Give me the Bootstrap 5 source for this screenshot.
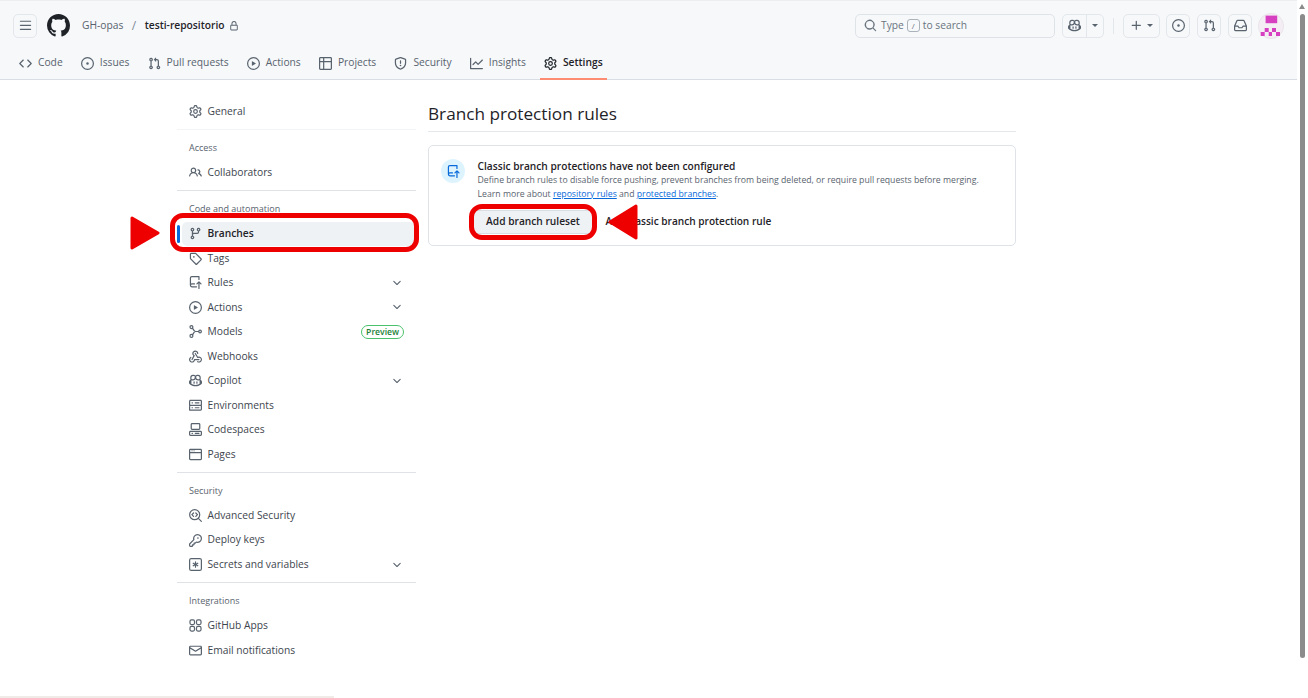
<!DOCTYPE html>
<html lang="en">
<head>
  <meta charset="UTF-8" />
  <meta name="viewport" content="width=device-width, initial-scale=1.0" />
  <title>Branches</title>
  <link href="https://cdn.jsdelivr.net/npm/bootstrap@5.3.0/dist/css/bootstrap.min.css" rel="stylesheet" />
  <style>
    html, body { height: 100%; overflow: hidden; }
    body { background: #fff; color: #1f2328; font-family: "Open Sans", "Liberation Sans", sans-serif; font-size: 10.25px; }
    .gh-page { width: 1308px; height: 698px; position: relative; overflow: hidden; }
    .ico { width: 13px; height: 13px; fill: currentColor; flex: none; }
    .ico-line { fill: none; stroke: currentColor; stroke-width: 1.5; stroke-linecap: round; stroke-linejoin: round; }

    .gh-head { width: 1297px; height: 80px; background: #f6f8fa; border-top: 1px solid #eceef0; border-bottom: 1px solid #d8dee4; color: #59636e; }
    .head-top { height: 49px; padding: 0 13px; }
    .icon-btn { height: 24px; border: 1px solid #e3e7eb; border-radius: 5px; color: #59636e; }
    .icon-sq { width: 24px; }
    .gh-logo { width: 23px; height: 23px; color: #1f2328; fill: currentColor; margin: 0 12px 0 10px; }
    .crumb-sep { margin: 0 8.5px; font-size: 12px; color: #818b98; }
    .crumb-repo { color: #1f2328; font-weight: 600; }
    .search-box { width: 200px; height: 24px; border: 1px solid #dfe3e8; border-radius: 5px; padding: 0 8px; color: #6b7580; }
    .key-hint { width: 13px; height: 13px; border: 1px solid #aab2ba; border-radius: 3px; font-size: 8px; margin: 0 3px; }
    .caret-down { width: 0; height: 0; border: 3px solid transparent; border-top: 3.5px solid #59636e; border-bottom: 0; }
    .split-line { width: 1px; height: 100%; background: #e3e7eb; }
    .head-rule { width: 1px; height: 16px; background: #e3e7eb; margin: 0 9px; }
    .avatar-pic { width: 26px; height: 26px; margin-left: 6px; }
    .gap-next { margin-left: 7px; }

    .tab-row { height: 32px; margin-top: -3px; padding-left: 19px; gap: 18.2px; }
    .tab-item { height: 32px; gap: 6px; color: #59636e; position: relative; }
    .tab-item.on { color: #1f2328; font-weight: 600; }
    .tab-item.on::after { content: ""; position: absolute; left: -4px; right: -4px; bottom: -1px; height: 2px; background: #fd8c73; }

    .gh-body { padding: 19px 0 0 177px; gap: 12px; }
    .side-col { width: 239px; color: #3d454e; }
    .side-row { height: 24.5px; padding: 0 13px 0 12px; gap: 5.5px; position: relative; color: #3d454e; text-decoration: none; }
    .side-row .ico { color: #59636e; }
    .side-row.on { background: #eff2f5; color: #1f2328; font-weight: 600; margin-left: 5px; padding-left: 7px; border-radius: 5px; }
    .side-row.on::before { content: ""; position: absolute; left: -5px; top: 3px; bottom: 3px; width: 3px; border-radius: 2px; background: #0969da; }
    .side-chev { width: 12px; height: 12px; color: #59636e; fill: currentColor; margin-left: auto; }
    .side-rule { height: 1px; background: #dfe3e8; margin-top: 5.25px; }
    .side-rule.soft { background: #f3f4f6; }
    .side-head { height: 30.5px; padding: 11px 0 0 12px; font-size: 9px; line-height: 14px; color: #59636e; }
    .preview-pill { margin-left: auto; margin-right: -1px; padding: 0 4px; height: 14px; line-height: 12px; font-size: 8.6px; font-weight: 600; color: #1a7f37; background: #fff; border: 1px solid #4ac26b; }

    .main-col { width: 588px; margin-top: -1px; }
    .main-title { height: 34px; margin: 0 0 13px; padding-top: 4px; border-bottom: 1px solid #e6e9ec; font-family: "Open Sans", sans-serif; font-size: 17.2px; line-height: 24px; font-weight: 400; color: #1f2328; }
    .rule-card { height: 101px; border: 1px solid #dfe3e8; border-radius: 5px; padding: 13px 12px 0 12px; gap: 12.5px; }
    .rule-badge { width: 24px; height: 24px; background: #ddf4ff; color: #0969da; flex: none; }
    .rule-title { font-size: 10.2px; font-weight: 600; line-height: 14px; margin-bottom: 1px; }
    .rule-text { font-size: 8.7px; line-height: 13.5px; color: #59636e; }
    .rule-text a { color: #0969da; }
    .rule-actions { margin-top: 9px; margin-left: -5px; gap: 12px; }
    .btn.rule-btn { width: 121px; height: 24px; padding: 0; font-size: 10.2px; font-weight: 600; color: #1f2328; background: #eff2f5; border: 1px solid #d8dee4; border-radius: 5px; }
    .rule-link { font-size: 10.1px; font-weight: 600; color: #1f2328; }

    .mark-box { position: absolute; border: 5px solid #ee0000; border-radius: 13px; }
    .mark-arrow { position: absolute; fill: #ee0000; stroke: #ee0000; stroke-width: 3; stroke-linejoin: round; }
    .box-branch { left: 170px; top: 213px; width: 249px; height: 39px; }
    .box-ruleset { left: 469px; top: 204px; width: 128px; height: 36px; }
    .arrow-branch { left: 130px; top: 216px; width: 30px; height: 34px; }
    .arrow-ruleset { left: 608px; top: 204px; width: 30px; height: 36px; }

    .scroll-thumb { position: absolute; left: 1300px; top: 14px; width: 5px; height: 644px; background: #8b8b8b; border-radius: 3px; }
    .scroll-up { position: absolute; left: 1299px; top: 4px; width: 0; height: 0; border: 3.5px solid transparent; border-bottom: 5px solid #8b8b8b; border-top: 0; }
    .scroll-low { position: absolute; left: 0; top: 696px; width: 334px; height: 2px; background: #f0ebe6; }
  </style>
</head>
<body>
  <svg width="0" height="0" class="position-absolute">
    <symbol id="i-bars" viewBox="0 0 16 16"><path d="M1 2.75A.75.75 0 0 1 1.75 2h12.5a.75.75 0 0 1 0 1.5H1.75A.75.75 0 0 1 1 2.75Zm0 5A.75.75 0 0 1 1.75 7h12.5a.75.75 0 0 1 0 1.5H1.75A.75.75 0 0 1 1 7.75ZM1.75 12h12.5a.75.75 0 0 1 0 1.5H1.75a.75.75 0 0 1 0-1.5Z"/></symbol>
    <symbol id="i-github" viewBox="0 0 16 16"><path d="M8 0c4.42 0 8 3.58 8 8a8.013 8.013 0 0 1-5.45 7.59c-.4.08-.55-.17-.55-.38 0-.27.01-1.13.01-2.2 0-.75-.25-1.23-.54-1.48 1.78-.2 3.65-.88 3.65-3.95 0-.88-.31-1.59-.82-2.15.08-.2.36-1.02-.08-2.12 0 0-.67-.22-2.2.82-.64-.18-1.32-.27-2-.27-.68 0-1.36.09-2 .27-1.53-1.03-2.2-.82-2.2-.82-.44 1.1-.16 1.92-.08 2.12-.51.56-.82 1.28-.82 2.15 0 3.06 1.86 3.75 3.64 3.95-.23.2-.44.55-.51 1.07-.46.21-1.61.55-2.33-.66-.15-.24-.6-.83-1.23-.82-.67.01-.27.38.01.53.34.19.73.9.82 1.13.16.45.68 1.31 2.69.94 0 .67.01 1.3.01 1.49 0 .21-.15.45-.55.38A7.995 7.995 0 0 1 0 8c0-4.42 3.58-8 8-8Z"/></symbol>
    <symbol id="i-lock" viewBox="0 0 16 16"><path d="M4 4a4 4 0 0 1 8 0v2h.25c.966 0 1.75.784 1.75 1.75v5.5A1.75 1.75 0 0 1 12.25 15h-8.5A1.75 1.75 0 0 1 2 13.25v-5.5C2 6.784 2.784 6 3.75 6H4Zm8.25 3.5h-8.5a.25.25 0 0 0-.25.25v5.5c0 .138.112.25.25.25h8.5a.25.25 0 0 0 .25-.25v-5.5a.25.25 0 0 0-.25-.25ZM10.5 6V4a2.5 2.5 0 1 0-5 0v2Z"/></symbol>
    <symbol id="i-code" viewBox="0 0 16 16"><path d="m11.28 3.22 4.25 4.25a.75.75 0 0 1 0 1.06l-4.25 4.25a.749.749 0 0 1-1.275-.326.749.749 0 0 1 .215-.734L13.94 8l-3.72-3.72a.749.749 0 0 1 .326-1.275.749.749 0 0 1 .734.215Zm-6.56 0a.751.751 0 0 1 1.042.018.751.751 0 0 1 .018 1.042L2.06 8l3.72 3.72a.749.749 0 0 1-.326 1.275.749.749 0 0 1-.734-.215L.47 8.53a.75.75 0 0 1 0-1.06Z"/></symbol>
    <symbol id="i-issue" viewBox="0 0 16 16"><path d="M8 9.5a1.5 1.5 0 1 0 0-3 1.5 1.5 0 0 0 0 3Z"/><path d="M8 0a8 8 0 1 1 0 16A8 8 0 0 1 8 0ZM1.5 8a6.5 6.5 0 1 0 13 0 6.5 6.5 0 0 0-13 0Z"/></symbol>
    <symbol id="i-pull" viewBox="0 0 16 16"><path d="M1.5 3.25a2.25 2.25 0 1 1 3 2.122v5.256a2.251 2.251 0 1 1-1.5 0V5.372A2.25 2.25 0 0 1 1.5 3.25Zm5.677-.177L9.573.677A.25.25 0 0 1 10 .854V2.5h1A2.5 2.5 0 0 1 13.5 5v5.628a2.251 2.251 0 1 1-1.5 0V5a1 1 0 0 0-1-1h-1v1.646a.25.25 0 0 1-.427.177L7.177 3.427a.25.25 0 0 1 0-.354ZM3.75 2.5a.75.75 0 1 0 0 1.5.75.75 0 0 0 0-1.5Zm0 9.5a.75.75 0 1 0 0 1.5.75.75 0 0 0 0-1.5Zm8.25.75a.75.75 0 1 0 1.5 0 .75.75 0 0 0-1.5 0Z"/></symbol>
    <symbol id="i-play" viewBox="0 0 16 16"><path d="M8 0a8 8 0 1 1 0 16A8 8 0 0 1 8 0ZM1.5 8a6.5 6.5 0 1 0 13 0 6.5 6.5 0 0 0-13 0Zm4.879-2.773 4.264 2.559a.25.25 0 0 1 0 .428l-4.264 2.559A.25.25 0 0 1 6 10.559V5.442a.25.25 0 0 1 .379-.215Z"/></symbol>
    <symbol id="i-table" viewBox="0 0 16 16"><path d="M0 1.75C0 .784.784 0 1.75 0h12.5C15.216 0 16 .784 16 1.75v12.5A1.75 1.75 0 0 1 14.25 16H1.75A1.75 1.75 0 0 1 0 14.25ZM6.5 6.5v8h7.75a.25.25 0 0 0 .25-.25V6.5Zm8-1.5V1.75a.25.25 0 0 0-.25-.25H6.5V5Zm-13 1.5v7.75c0 .138.112.25.25.25H5v-8ZM5 5V1.5H1.75a.25.25 0 0 0-.25.25V5Z"/></symbol>
    <symbol id="i-shield" viewBox="0 0 16 16"><path d="M7.467.133a1.748 1.748 0 0 1 1.066 0l5.25 1.68A1.75 1.75 0 0 1 15 3.48V7c0 1.566-.32 3.182-1.303 4.682-.983 1.498-2.585 2.813-5.032 3.855a1.697 1.697 0 0 1-1.33 0c-2.447-1.042-4.049-2.357-5.032-3.855C1.32 10.182 1 8.566 1 7V3.48a1.75 1.75 0 0 1 1.217-1.667Zm.61 1.429a.25.25 0 0 0-.153 0l-5.25 1.68a.25.25 0 0 0-.174.238V7c0 1.358.275 2.666 1.057 3.86.784 1.194 2.121 2.34 4.366 3.297a.196.196 0 0 0 .154 0c2.245-.956 3.582-2.104 4.366-3.298C13.225 9.666 13.5 8.36 13.5 7V3.48a.251.251 0 0 0-.174-.237l-5.25-1.68ZM8.75 4.75v3a.75.75 0 0 1-1.5 0v-3a.75.75 0 0 1 1.5 0ZM9 10.5a1 1 0 1 1-2 0 1 1 0 0 1 2 0Z"/></symbol>
    <symbol id="i-graph" viewBox="0 0 16 16"><path d="M1.5 1.75V13.5h13.75a.75.75 0 0 1 0 1.5H.75a.75.75 0 0 1-.75-.75V1.75a.75.75 0 0 1 1.5 0Zm14.28 2.53-5.25 5.25a.75.75 0 0 1-1.06 0L7 7.06 4.28 9.78a.751.751 0 0 1-1.042-.018.751.751 0 0 1-.018-1.042l3.25-3.25a.75.75 0 0 1 1.06 0L10 7.94l4.72-4.72a.751.751 0 0 1 1.042.018.751.751 0 0 1 .018 1.042Z"/></symbol>
    <symbol id="i-gear" viewBox="0 0 16 16"><path d="M8 0a8.2 8.2 0 0 1 .701.031C9.444.095 9.99.645 10.16 1.29l.288 1.107c.018.066.079.158.212.224.231.114.454.243.668.386.123.082.233.09.299.071l1.103-.303c.644-.176 1.392.021 1.82.63.27.385.506.792.704 1.218.315.675.111 1.422-.364 1.891l-.814.806c-.049.048-.098.147-.088.294.016.257.016.515 0 .772-.01.147.038.246.088.294l.814.806c.475.469.679 1.216.364 1.891a7.977 7.977 0 0 1-.704 1.217c-.428.61-1.176.807-1.82.63l-1.102-.302c-.067-.019-.177-.011-.3.071a5.909 5.909 0 0 1-.668.386c-.133.066-.194.158-.211.224l-.29 1.106c-.168.646-.715 1.196-1.458 1.26a8.006 8.006 0 0 1-1.402 0c-.743-.064-1.289-.614-1.458-1.26l-.289-1.106c-.018-.066-.079-.158-.212-.224a5.738 5.738 0 0 1-.668-.386c-.123-.082-.233-.09-.299-.071l-1.103.303c-.644.176-1.392-.021-1.82-.63a8.12 8.12 0 0 1-.704-1.218c-.315-.675-.111-1.422.363-1.891l.815-.806c.05-.048.098-.147.088-.294a6.214 6.214 0 0 1 0-.772c.01-.147-.038-.246-.088-.294l-.815-.806C.635 6.045.431 5.298.746 4.623a7.92 7.92 0 0 1 .704-1.217c.428-.61 1.176-.807 1.82-.63l1.102.302c.067.019.177.011.3-.071.214-.143.437-.272.668-.386.133-.066.194-.158.211-.224l.29-1.106C6.009.645 6.556.095 7.299.03 7.53.01 7.764 0 8 0Zm-.571 1.525c-.036.003-.108.036-.137.146l-.289 1.105c-.147.561-.549.967-.998 1.189-.173.086-.34.183-.5.29-.417.278-.97.423-1.529.27l-1.103-.303c-.109-.03-.175.016-.195.045-.22.312-.412.644-.573.99-.014.031-.021.11.059.19l.815.806c.411.406.562.957.53 1.456a4.709 4.709 0 0 0 0 .582c.032.499-.119 1.05-.53 1.456l-.815.806c-.081.08-.073.159-.059.19.162.346.353.677.573.989.02.03.085.076.195.046l1.102-.303c.56-.153 1.113-.008 1.53.27.161.107.328.204.501.29.447.222.85.629.997 1.189l.289 1.105c.029.109.101.143.137.146a6.6 6.6 0 0 0 1.142 0c.036-.003.108-.036.137-.146l.289-1.105c.147-.561.549-.967.998-1.189.173-.086.34-.183.5-.29.417-.278.97-.423 1.529-.27l1.103.303c.109.029.175-.016.195-.045.22-.313.411-.644.573-.99.014-.031.021-.11-.059-.19l-.815-.806c-.411-.406-.562-.957-.53-1.456a4.709 4.709 0 0 0 0-.582c-.032-.499.119-1.05.53-1.456l.815-.806c.081-.08.073-.159.059-.19a6.464 6.464 0 0 0-.573-.989c-.02-.03-.085-.076-.195-.046l-1.102.303c-.56.153-1.113.008-1.53-.27a4.44 4.44 0 0 0-.501-.29c-.447-.222-.85-.629-.997-1.189l-.289-1.105c-.029-.11-.101-.143-.137-.146a6.6 6.6 0 0 0-1.142 0ZM11 8a3 3 0 1 1-6 0 3 3 0 0 1 6 0ZM9.5 8a1.5 1.5 0 1 0-3.001.001A1.5 1.5 0 0 0 9.5 8Z"/></symbol>
    <symbol id="i-search" viewBox="0 0 16 16"><path d="M10.68 11.74a6 6 0 0 1-7.922-8.982 6 6 0 0 1 8.982 7.922l3.04 3.04a.749.749 0 0 1-.326 1.275.749.749 0 0 1-.734-.215ZM11.5 7a4.499 4.499 0 1 0-8.997 0A4.499 4.499 0 0 0 11.5 7Z"/></symbol>
    <symbol id="i-plus" viewBox="0 0 16 16"><path d="M7.75 2a.75.75 0 0 1 .75.75V7h4.25a.75.75 0 0 1 0 1.5H8.5v4.25a.75.75 0 0 1-1.5 0V8.5H2.75a.75.75 0 0 1 0-1.5H7V2.75A.75.75 0 0 1 7.75 2Z"/></symbol>
    <symbol id="i-inbox" viewBox="0 0 16 16"><path d="M2.8 2.06A1.75 1.75 0 0 1 4.41 1h7.18c.7 0 1.333.417 1.61 1.06l2.74 6.395c.04.093.06.194.06.295v4.5A1.75 1.75 0 0 1 14.25 15H1.75A1.75 1.75 0 0 1 0 13.25v-4.5c0-.101.02-.202.06-.295Zm1.61.44a.25.25 0 0 0-.23.152L1.887 8H4.75a.75.75 0 0 1 .6.3L6.625 10h2.75l1.275-1.7a.75.75 0 0 1 .6-.3h2.863L11.82 2.652a.25.25 0 0 0-.23-.152Zm10.09 7h-2.875l-1.275 1.7a.75.75 0 0 1-.6.3h-3.5a.75.75 0 0 1-.6-.3L4.375 9.5H1.5v3.75c0 .138.112.25.25.25h12.5a.25.25 0 0 0 .25-.25Z"/></symbol>
    <symbol id="i-people" viewBox="0 0 16 16"><path d="M2 5.5a3.5 3.5 0 1 1 5.898 2.549 5.508 5.508 0 0 1 3.034 4.084.75.75 0 1 1-1.482.235 4 4 0 0 0-7.9 0 .75.75 0 0 1-1.482-.236A5.507 5.507 0 0 1 3.102 8.05 3.493 3.493 0 0 1 2 5.5ZM11 4a3.001 3.001 0 0 1 2.22 5.018 5.01 5.01 0 0 1 2.56 3.012.749.749 0 0 1-.885.954.752.752 0 0 1-.549-.514 3.507 3.507 0 0 0-2.522-2.372.75.75 0 0 1-.574-.73v-.352a.75.75 0 0 1 .416-.672A1.5 1.5 0 0 0 11 5.5.75.75 0 0 1 11 4Zm-5.5-.5a2 2 0 1 0-.001 3.999A2 2 0 0 0 5.5 3.5Z"/></symbol>
    <symbol id="i-branch" viewBox="0 0 16 16"><path d="M9.5 3.25a2.25 2.25 0 1 1 3 2.122V6A2.5 2.5 0 0 1 10 8.5H6a1 1 0 0 0-1 1v1.128a2.251 2.251 0 1 1-1.5 0V5.372a2.25 2.25 0 1 1 1.5 0v1.836A2.493 2.493 0 0 1 6 7h4a1 1 0 0 0 1-1v-.628A2.25 2.25 0 0 1 9.5 3.25Zm-6 0a.75.75 0 1 0 1.5 0 .75.75 0 0 0-1.5 0Zm8.25-.75a.75.75 0 1 0 0 1.5.75.75 0 0 0 0-1.5ZM4.25 12a.75.75 0 1 0 0 1.5.75.75 0 0 0 0-1.5Z"/></symbol>
    <symbol id="i-tag" viewBox="0 0 16 16"><path d="M1 7.775V2.75C1 1.784 1.784 1 2.75 1h5.025c.464 0 .91.184 1.238.513l6.25 6.25a1.75 1.75 0 0 1 0 2.474l-5.026 5.026a1.75 1.75 0 0 1-2.474 0l-6.25-6.25A1.75 1.75 0 0 1 1 7.775Zm1.5 0c0 .066.026.13.073.177l6.25 6.25a.25.25 0 0 0 .354 0l5.025-5.025a.25.25 0 0 0 0-.354l-6.25-6.25a.25.25 0 0 0-.177-.073H2.75a.25.25 0 0 0-.25.25ZM6 5a1 1 0 1 1 0 2 1 1 0 0 1 0-2Z"/></symbol>
    <symbol id="i-rules" viewBox="0 0 16 16"><path d="M1 2.5A2.5 2.5 0 0 1 3.5 0h8.75a.75.75 0 0 1 .75.75v3.5a.75.75 0 0 1-1.5 0V1.5h-8a1 1 0 0 0-1 1v6.708A2.486 2.486 0 0 1 3.5 9h3.25a.75.75 0 0 1 0 1.5H3.5a1 1 0 0 0 0 2h5.75a.75.75 0 0 1 0 1.5H3.5A2.5 2.5 0 0 1 1 11.5Zm13.23 7.79h-.001l-1.224-1.224v6.184a.75.75 0 0 1-1.5 0V9.066L10.28 10.29a.75.75 0 0 1-1.06-1.061l2.505-2.504a.75.75 0 0 1 1.06 0L15.29 9.23a.751.751 0 0 1-.018 1.042.751.751 0 0 1-1.042.018Z"/></symbol>
    <symbol id="i-chev" viewBox="0 0 16 16"><path d="M12.78 5.22a.749.749 0 0 1 0 1.06l-4.25 4.25a.749.749 0 0 1-1.06 0L3.22 6.28a.749.749 0 1 1 1.06-1.06L8 8.939l3.72-3.719a.749.749 0 0 1 1.06 0Z"/></symbol>
    <symbol id="i-model" viewBox="0 0 16 16"><g class="ico-line"><circle cx="3" cy="2.6" r="1.8"/><circle cx="3" cy="13.4" r="1.8"/><circle cx="13.6" cy="8" r="1.6"/><path d="M4.3 3.8C5.5 5.5 6 8 8 8h3.8M4.3 12.2C5.5 10.5 6 8 8 8"/></g></symbol>
    <symbol id="i-hook" viewBox="0 0 16 16"><path d="M5.5 4.25a2.25 2.25 0 0 1 4.5 0 .75.75 0 0 0 1.5 0 3.75 3.75 0 1 0-6.14 2.889l-2.272 4.258a.75.75 0 0 0 1.324.706L7 7.25a.75.75 0 0 0-.309-1.015A2.25 2.25 0 0 1 5.5 4.25Z"/><path d="M7.364 3.607a.75.75 0 0 1 1.03.257l2.608 4.349a3.75 3.75 0 1 1-.628 6.785.75.75 0 0 1 .752-1.299 2.25 2.25 0 1 0-.033-3.88.75.75 0 0 1-1.03-.256L7.107 4.636a.75.75 0 0 1 .257-1.03Z"/><path d="M2.9 8.776A.75.75 0 0 1 2.625 9.8 2.25 2.25 0 1 0 6 11.75a.75.75 0 0 1 .75-.751h5.5a.75.75 0 0 1 0 1.5H7.425a3.751 3.751 0 1 1-5.55-3.998.75.75 0 0 1 1.024.274Z"/></symbol>
    <symbol id="i-copilot" viewBox="0 0 16 16"><path d="M7.998 15.035c-4.562 0-7.873-2.914-7.998-3.749V9.338c.085-.628.677-1.686 1.588-2.065.013-.07.024-.143.036-.218.029-.183.06-.384.126-.612-.201-.508-.254-1.084-.254-1.656 0-.87.128-1.769.693-2.484.579-.733 1.494-1.124 2.724-1.261 1.206-.134 2.262.034 2.944.765.05.053.096.108.139.165.044-.057.094-.112.143-.165.682-.731 1.738-.899 2.944-.765 1.23.137 2.145.528 2.724 1.261.566.715.693 1.614.693 2.484 0 .572-.053 1.148-.254 1.656.066.228.098.429.126.612.012.076.024.148.037.218.924.385 1.522 1.471 1.591 2.095v1.872c0 .766-3.351 3.795-8.002 3.795Zm0-1.485c2.28 0 4.584-1.11 5.002-1.433V7.862l-.023-.116c-.49.21-1.075.291-1.727.291-1.146 0-2.059-.327-2.71-.991A3.222 3.222 0 0 1 8 6.303a3.24 3.24 0 0 1-.544.743c-.65.664-1.563.991-2.71.991-.652 0-1.236-.081-1.727-.291l-.023.116v4.255c.419.323 2.722 1.433 5.002 1.433ZM6.762 2.83c-.193-.206-.637-.413-1.682-.297-1.019.113-1.479.404-1.713.7-.247.312-.369.789-.369 1.554 0 .793.129 1.171.308 1.371.162.181.519.379 1.442.379.853 0 1.339-.235 1.638-.54.315-.322.527-.827.617-1.553.117-.935-.037-1.395-.241-1.614Zm4.155-.297c-1.044-.116-1.488.091-1.681.297-.204.219-.359.679-.242 1.614.091.726.303 1.231.618 1.553.299.305.784.54 1.638.54.922 0 1.28-.198 1.442-.379.179-.2.308-.578.308-1.371 0-.765-.123-1.242-.37-1.554-.233-.296-.693-.587-1.713-.7Z"/><path d="M6.25 9.037a.75.75 0 0 1 .75.75v1.501a.75.75 0 0 1-1.5 0V9.787a.75.75 0 0 1 .75-.75Zm4.25.75v1.501a.75.75 0 0 1-1.5 0V9.787a.75.75 0 0 1 1.5 0Z"/></symbol>
    <symbol id="i-server" viewBox="0 0 16 16"><path d="M1.75 1h12.5c.966 0 1.75.784 1.75 1.75v4c0 .372-.116.717-.314 1 .198.283.314.628.314 1v4a1.75 1.75 0 0 1-1.75 1.75H1.75A1.75 1.75 0 0 1 0 13.75v-4c0-.372.116-.717.314-1a1.739 1.739 0 0 1-.314-1v-4C0 1.784.784 1 1.75 1ZM1.5 2.75v4c0 .138.112.25.25.25h12.5a.25.25 0 0 0 .25-.25v-4a.25.25 0 0 0-.25-.25H1.75a.25.25 0 0 0-.25.25Zm.25 5.75a.25.25 0 0 0-.25.25v4c0 .138.112.25.25.25h12.5a.25.25 0 0 0 .25-.25v-4a.25.25 0 0 0-.25-.25ZM7 4.75A.75.75 0 0 1 7.75 4h4.5a.75.75 0 0 1 0 1.5h-4.5A.75.75 0 0 1 7 4.75ZM7.75 10h4.5a.75.75 0 0 1 0 1.5h-4.5a.75.75 0 0 1 0-1.5ZM3 4.75A.75.75 0 0 1 3.75 4h.5a.75.75 0 0 1 0 1.5h-.5A.75.75 0 0 1 3 4.75ZM3.75 10h.5a.75.75 0 0 1 0 1.5h-.5a.75.75 0 0 1 0-1.5Z"/></symbol>
    <symbol id="i-spaces" viewBox="0 0 16 16"><path d="M0 11.25c0-.966.784-1.75 1.75-1.75h12.5c.966 0 1.75.784 1.75 1.75v3A1.75 1.75 0 0 1 14.25 16H1.75A1.75 1.75 0 0 1 0 14.25Zm2-9.5C2 .784 2.784 0 3.75 0h8.5C13.216 0 14 .784 14 1.75v5a1.75 1.75 0 0 1-1.75 1.75h-8.5A1.75 1.75 0 0 1 2 6.75Zm1.75-.25a.25.25 0 0 0-.25.25v5c0 .138.112.25.25.25h8.5a.25.25 0 0 0 .25-.25v-5a.25.25 0 0 0-.25-.25Zm-2 9.5a.25.25 0 0 0-.25.25v3c0 .138.112.25.25.25h12.5a.25.25 0 0 0 .25-.25v-3a.25.25 0 0 0-.25-.25Z"/><path d="M7 12.75a.75.75 0 0 1 .75-.75h4.5a.75.75 0 0 1 0 1.5h-4.5a.75.75 0 0 1-.75-.75Zm-4 0a.75.75 0 0 1 .75-.75h.5a.75.75 0 0 1 0 1.5h-.5a.75.75 0 0 1-.75-.75Z"/></symbol>
    <symbol id="i-browser" viewBox="0 0 16 16"><path d="M0 2.75C0 1.784.784 1 1.75 1h12.5c.966 0 1.75.784 1.75 1.75v10.5A1.75 1.75 0 0 1 14.25 15H1.75A1.75 1.75 0 0 1 0 13.25ZM14.5 6.5h-13v6.75c0 .138.112.25.25.25h12.5a.25.25 0 0 0 .25-.25Zm-13-1.5h13V2.75a.25.25 0 0 0-.25-.25H1.75a.25.25 0 0 0-.25.25ZM3 3h1.5v1H3Zm2.5 0H7v1H5.5Z"/></symbol>
    <symbol id="i-scan" viewBox="0 0 16 16"><g class="ico-line"><circle cx="7" cy="7" r="6.2"/><path d="M11.5 11.5 15.2 15.2M5.6 4.9 3.6 7l2 2.1M8.4 4.9l2 2.1-2 2.1"/></g></symbol>
    <symbol id="i-key" viewBox="0 0 16 16"><path d="M10.5 0a5.499 5.499 0 1 1-1.288 10.848l-.932.932a.749.749 0 0 1-.53.22H7v.75a.749.749 0 0 1-.22.53l-.5.5a.749.749 0 0 1-.53.22H5v.75a.749.749 0 0 1-.22.53l-.5.5a.749.749 0 0 1-.53.22h-2A1.75 1.75 0 0 1 0 14.25v-2c0-.199.079-.389.22-.53l4.932-4.932A5.5 5.5 0 0 1 10.5 0Zm-4 5.5c-.001.431.069.86.205 1.269a.75.75 0 0 1-.181.768L1.5 12.56v1.69c0 .138.112.25.25.25h1.69l.06-.06v-1.19a.75.75 0 0 1 .75-.75h1.19l.06-.06v-1.19a.75.75 0 0 1 .75-.75h1.19l1.023-1.025a.75.75 0 0 1 .768-.18A4 4 0 1 0 6.5 5.5ZM11 6a1 1 0 1 1 0-2 1 1 0 0 1 0 2Z"/></symbol>
    <symbol id="i-asterisk" viewBox="0 0 16 16"><path d="M0 2.75A2.75 2.75 0 0 1 2.75 0h10.5A2.75 2.75 0 0 1 16 2.75v10.5A2.75 2.75 0 0 1 13.25 16H2.75A2.75 2.75 0 0 1 0 13.25ZM2.75 1.5c-.69 0-1.25.56-1.25 1.25v10.5c0 .69.56 1.25 1.25 1.25h10.5c.69 0 1.25-.56 1.25-1.25V2.75c0-.69-.56-1.25-1.25-1.25Z"/><path d="M8 4a.75.75 0 0 1 .75.75V6.7l1.69-.975a.75.75 0 0 1 .75 1.3L9.5 8l1.69.976a.75.75 0 0 1-.75 1.298L8.75 9.3v1.951a.75.75 0 0 1-1.5 0V9.299l-1.69.976a.75.75 0 0 1-.75-1.3L6.5 8l-1.69-.975a.75.75 0 0 1 .75-1.3l1.69.976V4.75A.75.75 0 0 1 8 4Z"/></symbol>
    <symbol id="i-apps" viewBox="0 0 16 16"><g class="ico-line"><rect x="1.2" y="1.2" width="5.6" height="5.6" rx="1.8"/><rect x="9.2" y="1.2" width="5.6" height="5.6" rx="1.8"/><rect x="1.2" y="9.2" width="5.6" height="5.6" rx="1.8"/><rect x="9.2" y="9.2" width="5.6" height="5.6" rx="1.8"/></g></symbol>
    <symbol id="i-mail" viewBox="0 0 16 16"><path d="M1.75 2h12.5c.966 0 1.75.784 1.75 1.75v8.5A1.75 1.75 0 0 1 14.25 14H1.75A1.75 1.75 0 0 1 0 12.25v-8.5C0 2.784.784 2 1.75 2ZM1.5 12.251c0 .138.112.25.25.25h12.5a.25.25 0 0 0 .25-.25V5.809L8.38 9.397a.75.75 0 0 1-.76 0L1.5 5.809v6.442Zm13-8.181v-.32a.25.25 0 0 0-.25-.25H1.75a.25.25 0 0 0-.25.25v.32L8 7.88Z"/></symbol>
  </svg>

  <div class="gh-page">
    <header class="gh-head">
      <div class="head-top d-flex align-items-center">
        <span class="icon-btn icon-sq d-flex align-items-center justify-content-center"><svg class="ico"><use href="#i-bars"/></svg></span>
        <svg class="gh-logo"><use href="#i-github"/></svg>
        <span>GH-opas</span>
        <span class="crumb-sep">/</span>
        <span class="crumb-repo">testi-repositorio</span>
        <svg class="ico ms-1" style="width:10px;height:10px"><use href="#i-lock"/></svg>
        <div class="search-box d-flex align-items-center ms-auto">
          <svg class="ico me-1"><use href="#i-search"/></svg>
          <span>Type</span><span class="key-hint d-flex align-items-center justify-content-center">/</span><span>to search</span>
        </div>
        <div class="icon-btn d-flex align-items-center gap-next">
          <span class="d-flex justify-content-center" style="width:23px"><svg class="ico"><use href="#i-copilot"/></svg></span>
          <span class="split-line"></span>
          <span class="d-flex justify-content-center" style="width:16px"><span class="caret-down"></span></span>
        </div>
        <span class="head-rule"></span>
        <div class="icon-btn d-flex align-items-center justify-content-center gap-1" style="width:37px">
          <svg class="ico"><use href="#i-plus"/></svg><span class="caret-down"></span>
        </div>
        <span class="icon-btn icon-sq d-flex align-items-center justify-content-center" style="margin-left:6px"><svg class="ico"><use href="#i-issue"/></svg></span>
        <span class="icon-btn icon-sq d-flex align-items-center justify-content-center gap-next"><svg class="ico"><use href="#i-pull"/></svg></span>
        <span class="icon-btn icon-sq d-flex align-items-center justify-content-center gap-next"><svg class="ico"><use href="#i-inbox"/></svg></span>
        <svg class="avatar-pic" viewBox="0 0 26 26">
          <circle cx="13" cy="13" r="12.6" fill="#f4eef4" stroke="#e3dbe3" stroke-width=".6"/>
          <g fill="#d63fc0">
            <rect x="7.6" y="2.6" width="11.6" height="7.6"/>
            <rect x="6.7" y="15" width="4" height="4"/><rect x="14" y="15" width="4" height="4"/>
            <rect x="2.7" y="19" width="4" height="4"/><rect x="10.7" y="19" width="3.3" height="4"/><rect x="18" y="19" width="4" height="4"/>
          </g>
        </svg>
      </div>
      <nav class="tab-row d-flex">
        <span class="tab-item d-flex align-items-center"><svg class="ico"><use href="#i-code"/></svg>Code</span>
        <span class="tab-item d-flex align-items-center"><svg class="ico"><use href="#i-issue"/></svg>Issues</span>
        <span class="tab-item d-flex align-items-center"><svg class="ico"><use href="#i-pull"/></svg>Pull requests</span>
        <span class="tab-item d-flex align-items-center"><svg class="ico"><use href="#i-play"/></svg>Actions</span>
        <span class="tab-item d-flex align-items-center"><svg class="ico"><use href="#i-table"/></svg>Projects</span>
        <span class="tab-item d-flex align-items-center"><svg class="ico"><use href="#i-shield"/></svg>Security</span>
        <span class="tab-item d-flex align-items-center"><svg class="ico"><use href="#i-graph"/></svg>Insights</span>
        <span class="tab-item on d-flex align-items-center"><svg class="ico"><use href="#i-gear"/></svg>Settings</span>
      </nav>
    </header>

    <div class="gh-body d-flex align-items-start">
      <aside class="side-col">
        <a class="side-row d-flex align-items-center"><svg class="ico"><use href="#i-gear"/></svg>General</a>
        <div class="side-rule soft"></div>
        <div class="side-head">Access</div>
        <a class="side-row d-flex align-items-center"><svg class="ico"><use href="#i-people"/></svg>Collaborators</a>
        <div class="side-rule"></div>
        <div class="side-head">Code and automation</div>
        <a class="side-row on d-flex align-items-center"><svg class="ico"><use href="#i-branch"/></svg>Branches</a>
        <a class="side-row d-flex align-items-center"><svg class="ico"><use href="#i-tag"/></svg>Tags</a>
        <a class="side-row d-flex align-items-center"><svg class="ico"><use href="#i-rules"/></svg>Rules<svg class="side-chev"><use href="#i-chev"/></svg></a>
        <a class="side-row d-flex align-items-center"><svg class="ico"><use href="#i-play"/></svg>Actions<svg class="side-chev"><use href="#i-chev"/></svg></a>
        <a class="side-row d-flex align-items-center"><svg class="ico"><use href="#i-model"/></svg>Models<span class="badge rounded-pill preview-pill">Preview</span></a>
        <a class="side-row d-flex align-items-center"><svg class="ico"><use href="#i-hook"/></svg>Webhooks</a>
        <a class="side-row d-flex align-items-center"><svg class="ico"><use href="#i-copilot"/></svg>Copilot<svg class="side-chev"><use href="#i-chev"/></svg></a>
        <a class="side-row d-flex align-items-center"><svg class="ico"><use href="#i-server"/></svg>Environments</a>
        <a class="side-row d-flex align-items-center"><svg class="ico"><use href="#i-spaces"/></svg>Codespaces</a>
        <a class="side-row d-flex align-items-center"><svg class="ico"><use href="#i-browser"/></svg>Pages</a>
        <div class="side-rule"></div>
        <div class="side-head">Security</div>
        <a class="side-row d-flex align-items-center"><svg class="ico"><use href="#i-scan"/></svg>Advanced Security</a>
        <a class="side-row d-flex align-items-center"><svg class="ico"><use href="#i-key"/></svg>Deploy keys</a>
        <a class="side-row d-flex align-items-center"><svg class="ico"><use href="#i-asterisk"/></svg>Secrets and variables<svg class="side-chev"><use href="#i-chev"/></svg></a>
        <div class="side-rule"></div>
        <div class="side-head">Integrations</div>
        <a class="side-row d-flex align-items-center"><svg class="ico"><use href="#i-apps"/></svg>GitHub Apps</a>
        <a class="side-row d-flex align-items-center"><svg class="ico"><use href="#i-mail"/></svg>Email notifications</a>
      </aside>

      <main class="main-col">
        <h1 class="main-title">Branch protection rules</h1>
        <div class="rule-card d-flex">
          <span class="rule-badge rounded-circle d-flex align-items-center justify-content-center"><svg class="ico"><use href="#i-rules"/></svg></span>
          <div>
            <div class="rule-title">Classic branch protections have not been configured</div>
            <div class="rule-text">Define branch rules to disable force pushing, prevent branches from being deleted, or require pull requests before merging.<br>Learn more about <a href="#">repository rules</a> and <a href="#">protected branches</a>.</div>
            <div class="rule-actions d-flex align-items-center">
              <button type="button" class="btn rule-btn">Add branch ruleset</button>
              <span class="rule-link">Add classic branch protection rule</span>
            </div>
          </div>
        </div>
      </main>
    </div>

    <div class="mark-box box-branch"></div>
    <div class="mark-box box-ruleset"></div>
    <svg class="mark-arrow arrow-branch" viewBox="0 0 30 34"><polygon points="2,2 28,17 2,32"/></svg>
    <svg class="mark-arrow arrow-ruleset" viewBox="0 0 30 36"><polygon points="28,2 2,18 28,34"/></svg>

    <div class="scroll-up"></div>
    <div class="scroll-thumb"></div>
    <div class="scroll-low"></div>
  </div>

  <script src="https://cdn.jsdelivr.net/npm/bootstrap@5.3.0/dist/js/bootstrap.bundle.min.js"></script>
</body>
</html>
